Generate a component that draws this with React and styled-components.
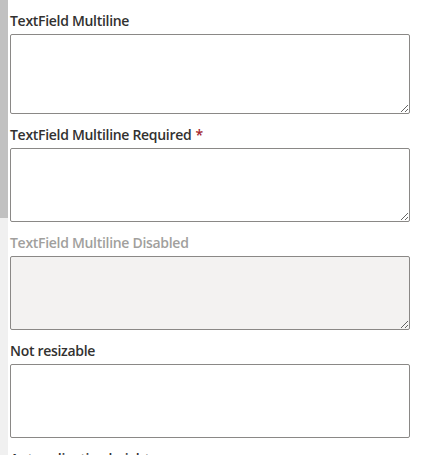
import React from "react";
import styled, { createGlobalStyle } from "styled-components";

const Global = createGlobalStyle`
  html, body { margin: 0; padding: 0; background: #ffffff; overflow: hidden; }
  body { font-family: "Open Sans", "Noto Sans", sans-serif; }
`;

const Page = styled.div`
  display: flex;
  height: 455px;
  overflow: hidden;
`;

const Rail = styled.div`
  width: 8px;
  flex: 0 0 8px;
  background: #f0f0f0;
  display: flex;
  flex-direction: column;
`;

const Thumb = styled.div`
  height: 218px;
  background: #c1c1c1;
`;

const Content = styled.div`
  padding-left: 2px;
  width: 400px;
  display: flex;
  flex-direction: column;
`;

const Field = styled.div`
  display: flex;
  flex-direction: column;
`;

const Label = styled.label`
  margin-top: 6px;
  padding: 5px 0 3px;
  font-size: 14px;
  line-height: 20px;
  font-weight: 600;
  letter-spacing: -0.3px;
  color: ${(p) => (p.$disabled ? "#a19f9d" : "#323130")};
  white-space: nowrap;
`;

const Star = styled.span`
  color: #a4262c;
  padding-left: 4px;
`;

const Area = styled.textarea`
  display: block;
  box-sizing: border-box;
  width: 400px;
  height: ${(p) => p.$h}px;
  margin: 0;
  border: 1px solid #8a8886;
  border-radius: 2px;
  padding: 6px 8px;
  font-family: inherit;
  font-size: 14px;
  line-height: 17px;
  color: #323130;
  background: ${(p) => (p.disabled ? "#f3f2f1" : "#ffffff")};
  resize: ${(p) => (p.$fixed ? "none" : "vertical")};
  outline: none;
`;

const fields = [
  { label: "TextField Multiline", h: 80 },
  { label: "TextField Multiline Required", h: 74, required: true },
  { label: "TextField Multiline Disabled", h: 74, disabled: true },
  { label: "Not resizable", h: 74, fixed: true },
  { label: "Auto-adjusting height", h: 60, fixed: true },
];

export default function App() {
  return (
    <>
      <Global />
      <Page>
        <Rail>
          <Thumb />
        </Rail>
        <Content>
          {fields.map((f) => (
            <Field key={f.label}>
              <Label $disabled={f.disabled}>
                {f.label}
                {f.required && <Star>*</Star>}
              </Label>
              <Area $h={f.h} $fixed={f.fixed} disabled={f.disabled} />
            </Field>
          ))}
        </Content>
      </Page>
    </>
  );
}
